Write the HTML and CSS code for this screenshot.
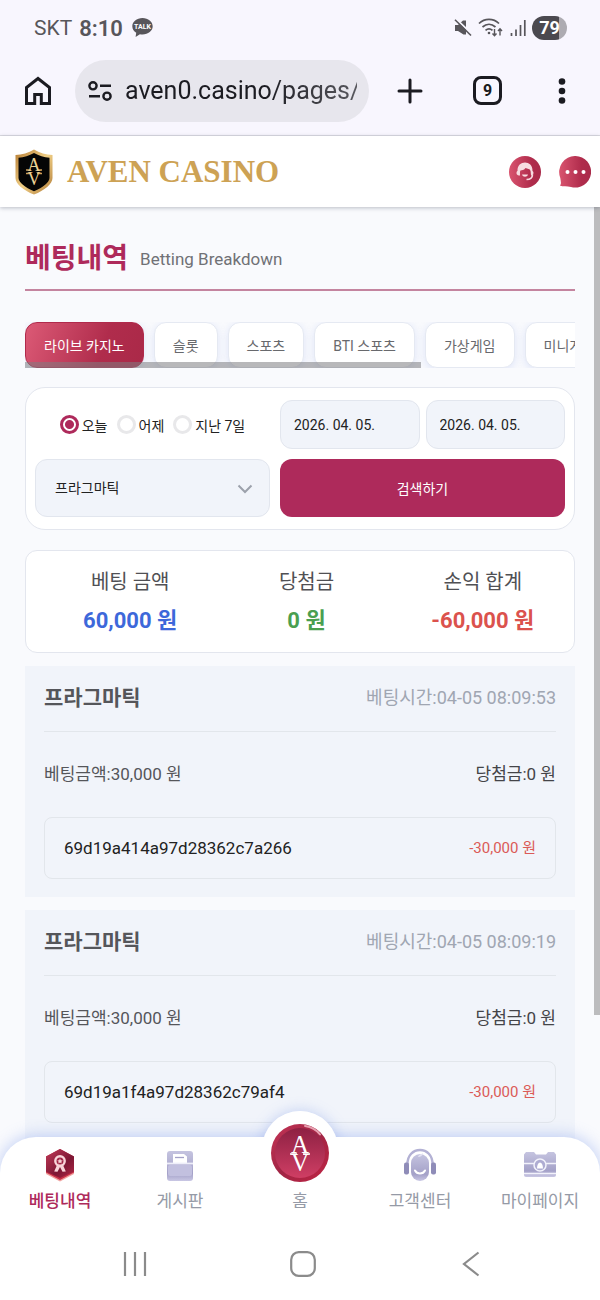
FILE: index.html
```html
<!DOCTYPE html>
<html lang="ko">
<head>
  <meta charset="UTF-8">
  <meta name="viewport" content="width=device-width, initial-scale=1.0">
  <title>AVEN CASINO - 베팅내역</title>
  <link rel="stylesheet" href="styles.css">
</head>
<body>
  <div class="status-bar">
    <span class="carrier">SKT</span>
    <span class="clock">8:10</span>
    <svg class="talk" width="21" height="20" viewBox="0 0 21 20">
      <path d="M10.500 0C4.700 0 .3 3.700 .3 8.300c0 2.700 1.500 5 3.900 6.500l-.6 4.200 4.300-2.700c.8.200 1.700.2 2.600.2 5.700 0 10.200-3.700 10.200-8.200S16.200 0 10.500 0z" fill="#58565b"/>
      <text x="10.500" y="11" text-anchor="middle" class="talk-text">TALK</text>
    </svg>
    <div class="status-icons">
      <svg width="18" height="18" viewBox="0 0 18 18">
        <path d="M1 6h3l5-4.500h3v14H9.500L4 12H1z" fill="#58565b"/>
        <path d="M1.500 -.5l17 16" stroke="#f8f6fe" stroke-width="2"/>
        <path d="M1 .8l16 15.700" stroke="#58565b" stroke-width="1.600"/>
      </svg>
      <svg width="26" height="20" viewBox="0 0 26 20" fill="none" stroke="#58565b" stroke-width="1.700">
        <path d="M1 5.500c5.500-5.500 14.500-5.500 20 0M4.500 9c4-3.500 9-3.500 13 0M7.500 12.300c2-1.700 5-1.700 7 0"/>
        <circle cx="11" cy="15" r="1.300" fill="#58565b" stroke="none"/>
        <path d="M16.500 11v6.500M14.500 15.500l2 2.200 2-2.200M22 17.500V11M20 13l2-2.200 2 2.200" stroke-width="1.400"/>
      </svg>
      <svg width="16" height="18" viewBox="0 0 16 18" stroke="#58565b" stroke-width="1.700">
        <path d="M1.500 14v3M6 10.500V17M10.500 6v11M14.800 1v16"/>
      </svg>
      <span class="battery">79</span>
    </div>
  </div>

  <div class="browser-bar">
    <button class="icon-btn" aria-label="홈">
      <svg width="26" height="30" viewBox="0 0 26 30" fill="none" stroke="#1b1b21" stroke-width="3">
        <path d="M1.500 27.500V11.500L13 2.500l11.500 9v16h-8.200v-9H9.700v9z"/>
      </svg>
    </button>
    <div class="address">
      <svg width="24" height="20" viewBox="0 0 24 20" fill="none" stroke="#1b1b21" stroke-width="2.400">
        <circle cx="5" cy="4.800" r="3.600"/>
        <circle cx="19" cy="15.200" r="3.600"/>
        <path d="M12 4.800h11M1 15.200h11"/>
      </svg>
      <input class="url" type="text" value="aven0.casino/pages/" aria-label="주소" readonly>
    </div>
    <button class="icon-btn plus" aria-label="새 탭">
      <svg width="26" height="26" viewBox="0 0 26 26" stroke="#1b1b21" stroke-width="3" stroke-linecap="round"><path d="M13 2v22M2 13h22"/></svg>
    </button>
    <button class="tab-count" aria-label="탭 9개">9</button>
    <button class="icon-btn more" aria-label="더보기">
      <svg width="8" height="26" viewBox="0 0 8 26" fill="#1b1b21"><circle cx="4" cy="3.500" r="3.300"/><circle cx="4" cy="13" r="3.300"/><circle cx="4" cy="22.500" r="3.300"/></svg>
    </button>
  </div>

  <header class="site-header">
    <a class="logo" href="#">
      <svg width="38" height="46" viewBox="0 0 38 46">
        <defs>
          <linearGradient id="gold" x1="0" y1="0" x2="1" y2="1">
            <stop offset="0" stop-color="#b57b32"/>
            <stop offset=".5" stop-color="#f0cf86"/>
            <stop offset="1" stop-color="#b07a35"/>
          </linearGradient>
        </defs>
        <path d="M19 .5c5.500 3.500 12 5 18.500 5.500v23c0 6-8 12.500-18.500 16.500C8.500 41.500.5 35 .5 29V6C7 5.500 13.500 4 19 .5z" fill="url(#gold)"/>
        <path d="M19 4c4.800 2.800 10 4.200 15.500 4.800V29c0 4.200-6.500 9.500-15.500 13.200C10 38.500 3.500 33.200 3.500 29V8.800C9 8.200 14.200 6.800 19 4z" fill="#050505"/>
        <path d="M11 21h5M22 21h5M11 24.500h5M22 24.500h5" stroke="#cfa15c" stroke-width="1.300"/>
        <text x="19" y="22" text-anchor="middle" class="shield-letter">A</text>
        <text x="19" y="36" text-anchor="middle" class="shield-letter">V</text>
      </svg>
      <span class="brand">AVEN CASINO</span>
    </a>
    <div class="header-actions">
      <button class="icon-btn" aria-label="고객센터">
        <svg width="32" height="32" viewBox="0 0 32 32">
          <defs>
            <linearGradient id="rose" x1="0" y1="0" x2="1" y2="0">
              <stop offset="0" stop-color="#d9546f"/>
              <stop offset=".7" stop-color="#b02c4c"/>
              <stop offset="1" stop-color="#a92b4a"/>
            </linearGradient>
          </defs>
          <circle cx="16" cy="16" r="16" fill="url(#rose)"/>
          <path d="M8.500 15C8 3.800 24 3.800 23.500 15h-2c-.5-2.500-3-2-5-3-1.800 2.500-3.500 2-5 2.500-.6.200-.5 2.500-.5 5H10c-3 0-3-4-1.500-4.500zM21.500 14.500c3.800-.5 4 4.800.5 5z" fill="#f7dce1"/>
          <path d="M13 18.500h6c-.8 3-5.200 3-6 0z" fill="#f7dce1"/>
          <path d="M23.500 18.500c0 3.500-2.500 5-6 5" fill="none" stroke="#f7dce1" stroke-width="1.600"/>
        </svg>
      </button>
      <button class="icon-btn" aria-label="메시지">
        <svg width="32" height="32" viewBox="0 0 32 32">
          <path d="M16.500 0A15.800 15.800 0 1 1 12 31C8 30 4 31 .8 29.500c2-2 .8-4.500.5-7.500A16 16 0 0 1 16.500 0z" fill="url(#rose)"/>
          <circle cx="8.500" cy="16" r="2" fill="#fff"/><circle cx="16.500" cy="16" r="2" fill="#fff"/><circle cx="24.500" cy="16" r="2" fill="#fff"/>
        </svg>
      </button>
    </div>
  </header>

  <main class="content">
    <div class="page-title">
      <h1>베팅내역</h1>
      <span>Betting Breakdown</span>
    </div>

    <div class="tabs">
      <button class="tab active">라이브 카지노</button>
      <button class="tab">슬롯</button>
      <button class="tab">스포츠</button>
      <button class="tab">BTI 스포츠</button>
      <button class="tab">가상게임</button>
      <button class="tab">미니게임</button>
      <i class="tabs-scroll"></i>
    </div>

    <form class="filter">
      <div class="periods">
        <label><input type="radio" name="period" checked>오늘</label>
        <label><input type="radio" name="period">어제</label>
        <label><input type="radio" name="period">지난 7일</label>
      </div>
      <div class="dates">
        <input type="text" value="2026. 04. 05." aria-label="시작일">
        <input type="text" value="2026. 04. 05." aria-label="종료일">
      </div>
      <div class="vendor">
        <select aria-label="게임사">
          <option>프라그마틱</option>
        </select>
        <svg width="16" height="10" viewBox="0 0 16 10" fill="none" stroke="#9ca1ab" stroke-width="2"><path d="M1.500 1.500L8 8l6.500-6.500"/></svg>
      </div>
      <button class="search" type="button">검색하기</button>
    </form>

    <dl class="summary">
      <div>
        <dt>베팅 금액</dt>
        <dd class="blue">60,000 원</dd>
      </div>
      <div>
        <dt>당첨금</dt>
        <dd class="green">0 원</dd>
      </div>
      <div>
        <dt>손익 합계</dt>
        <dd class="red">-60,000 원</dd>
      </div>
    </dl>

    <article class="bet">
      <div class="bet-head">
        <h2>프라그마틱</h2>
        <time>베팅시간:04-05 08:09:53</time>
      </div>
      <div class="bet-row">
        <span>베팅금액:30,000 원</span>
        <span class="win">당첨금:0 원</span>
      </div>
      <div class="bet-detail">
        <span>69d19a414a97d28362c7a266</span>
        <span class="loss">-30,000 원</span>
      </div>
    </article>

    <article class="bet">
      <div class="bet-head">
        <h2>프라그마틱</h2>
        <time>베팅시간:04-05 08:09:19</time>
      </div>
      <div class="bet-row">
        <span>베팅금액:30,000 원</span>
        <span class="win">당첨금:0 원</span>
      </div>
      <div class="bet-detail">
        <span>69d19a1f4a97d28362c79af4</span>
        <span class="loss">-30,000 원</span>
      </div>
    </article>
    <i class="page-scroll"></i>
  </main>

  <nav class="bottom-nav">
    <div class="nav-list">
      <a class="current" href="#">
        <svg width="30" height="34" viewBox="0 0 30 34">
          <defs>
            <linearGradient id="hex" x1="0" y1="0" x2="1" y2="1">
              <stop offset="0" stop-color="#c13a58"/>
              <stop offset=".6" stop-color="#7d1734"/>
              <stop offset="1" stop-color="#b02645"/>
            </linearGradient>
          </defs>
          <path d="M15 3l14 7v16l-14 7.500L1 26V10z" fill="#f0a3a0"/>
          <path d="M15 1l14 7.500v16L15 32 1 24.500v-16z" fill="#c52d45"/>
          <path d="M15 1l14 7.500v15L15 30 1 23.500v-15z" fill="url(#hex)"/>
          <path d="M12 17l-2.800 6.500 3.300.2 2.500-4.700 2.500 4.700 3.300-.2L18 17" fill="#f8d3d8"/>
          <circle cx="15" cy="13" r="4.700" fill="#a02444" stroke="#f8d3d8" stroke-width="2.400"/>
          <path d="M15 10.500l.8 1.700 1.900.2-1.400 1.300.4 1.900-1.700-1-1.700 1 .4-1.900-1.400-1.300 1.900-.2z" fill="#f8d3d8"/>
        </svg>
        <span>베팅내역</span>
      </a>
      <a href="#">
        <svg width="30" height="34" viewBox="0 0 30 34">
          <defs>
            <linearGradient id="lav" x1="0" y1="0" x2="0" y2="1">
              <stop offset="0" stop-color="#c5c4e0"/>
              <stop offset=".75" stop-color="#a4a1c8"/>
              <stop offset="1" stop-color="#c9c7e4"/>
            </linearGradient>
          </defs>
          <rect x="2" y="3" width="26" height="30" rx="3" fill="url(#lav)"/>
          <path d="M8 6h11l3 2.500V15H8z" fill="#fff"/>
          <path d="M10 9.500h9" stroke="#a4a1c8" stroke-width="1.300"/>
          <path d="M2 15.500h26" stroke="#eeeef9" stroke-width="1.800"/>
          <rect x="3" y="17" width="24" height="11" rx="2" fill="#c2c0df"/>
        </svg>
        <span>게시판</span>
      </a>
      <a href="#">
        <svg class="home-badge" width="76" height="76" viewBox="0 0 76 76">
          <defs>
            <linearGradient id="badge-rim" x1="0" y1="0" x2="1" y2="1">
              <stop offset="0" stop-color="#c53456"/>
              <stop offset=".5" stop-color="#a02545"/>
              <stop offset="1" stop-color="#c02343"/>
            </linearGradient>
            <linearGradient id="badge-face" x1="0" y1="0" x2="0" y2="1">
              <stop offset="0" stop-color="#8e2143"/>
              <stop offset="1" stop-color="#cf3e64"/>
            </linearGradient>
          </defs>
          <circle cx="38" cy="38" r="38" fill="#fff"/>
          <circle cx="38" cy="42" r="29" fill="url(#badge-rim)"/>
          <circle cx="38" cy="42" r="25" fill="url(#badge-face)"/>
          <path d="M43 15c7 1 12 4.500 15 8.500" fill="none" stroke="#e7a0b0" stroke-width="2" stroke-linecap="round"/>
          <path d="M28 43h7M41 43h7" stroke="#fff" stroke-width="1.300"/>
          <text x="38" y="42" text-anchor="middle" class="badge-letter">A</text>
          <text x="38" y="60" text-anchor="middle" class="badge-letter">V</text>
        </svg>
        <span>홈</span>
      </a>
      <a href="#">
        <svg width="34" height="34" viewBox="0 0 34 34">
          <path d="M4.500 17C3.500-3 30.500-3 29.500 17" fill="none" stroke="#b3b1d4" stroke-width="2.500"/>
          <rect x="1" y="14.500" width="5" height="12" rx="2" fill="#8f8cb8"/>
          <rect x="28" y="14.500" width="5" height="12" rx="2" fill="#8f8cb8"/>
          <rect x="8" y="6" width="18" height="27" rx="9" fill="url(#lav)"/>
          <path d="M12 22.500c2 4 8 4 10 0" fill="none" stroke="#fff" stroke-width="2" stroke-linecap="round"/>
          <path d="M15 9c1-3 4-3 5-4-.5 2.500-2 4-5 4z" fill="#e3e2f2"/>
        </svg>
        <span>고객센터</span>
      </a>
      <a href="#">
        <svg width="34" height="34" viewBox="0 0 34 34">
          <path d="M1 6.500L3 4h8l2 2.500h10L25 4h6l2 2.500V27a2 2 0 0 1-2 2H3a2 2 0 0 1-2-2z" fill="url(#lav)"/>
          <path d="M1 15.500h32M1 25.500h32" fill="none" stroke="#f2f2fb" stroke-width="1.500"/>
          <circle cx="17" cy="17" r="6" fill="#aeacd2" stroke="#f2f2fb" stroke-width="1.500"/>
          <path d="M14 20.500c0-4 1.500-6 3-6s3 2 3 6z" fill="#fff"/>
        </svg>
        <span>마이페이지</span>
      </a>
    </div>
  </nav>

  <div class="system-bar">
    <button class="icon-btn" aria-label="최근 앱">
      <svg width="26" height="26" viewBox="0 0 26 26" stroke="#8b8b8b" stroke-width="2.200"><path d="M3 1v24M13 1v24M23 1v24"/></svg>
    </button>
    <button class="icon-btn" aria-label="홈 화면">
      <svg width="26" height="26" viewBox="0 0 26 26" fill="none" stroke="#8b8b8b" stroke-width="2.200"><rect x="1.200" y="1.200" width="23.600" height="23.600" rx="7.500"/></svg>
    </button>
    <button class="icon-btn" aria-label="뒤로">
      <svg width="26" height="26" viewBox="0 0 26 26" fill="none" stroke="#8b8b8b" stroke-width="2.200"><path d="M20.500 1.500L6 13l14.500 11.500"/></svg>
    </button>
  </div>
</body>
</html>
```
FILE: styles.css
```css
* {
  box-sizing: border-box;
}
body {
  margin: 0;
  height: 100vh;
  display: flex;
  flex-direction: column;
  overflow: hidden;
  background: #fff;
  color: #222;
  font-family: Roboto, "Noto Sans CJK KR", sans-serif;
}
button, input, select {
  font-family: inherit;
  margin: 0;
}
svg {
  display: block;
  flex: none;
}
a {
  text-decoration: none;
}
h1, h2, dl, dd {
  margin: 0;
}
.icon-btn {
  flex: none;
  padding: 0;
  border: none;
  background: none;
}

/* phone status bar */
.status-bar {
  display: flex;
  align-items: center;
  height: 56px;
  padding: 0 33px 0 34px;
  background: #f8f6fe;
  color: #58565b;
  flex: none;
}
.carrier {
  font-size: 21px;
}
.clock {
  margin-left: 7px;
  font-size: 22px;
  font-weight: 600;
}
.talk {
  margin-left: 9px;
}
.talk-text {
  font: bold 7px Roboto, sans-serif;
  fill: #fff;
}
.status-icons {
  display: flex;
  align-items: center;
  gap: 6px;
  margin-left: auto;
}
.battery {
  width: 35px;
  border-radius: 12px;
  background: linear-gradient(to right, #4b494f 78%, #adabb1 78%);
  color: #fff;
  font-size: 18px;
  font-weight: bold;
  line-height: 24px;
  text-align: center;
}

/* browser bar */
.browser-bar {
  display: flex;
  align-items: center;
  height: 80px;
  padding: 0 34px 10px 25px;
  border-bottom: 1px solid #dcdbe2;
  background: #f8f6fe;
  flex: none;
}
.address {
  display: flex;
  flex: 1;
  align-items: center;
  gap: 13px;
  min-width: 0;
  height: 62px;
  margin-left: 24px;
  padding: 0 12px 0 13px;
  border-radius: 31px;
  background: #e7e6ed;
}
.url {
  flex: 1;
  min-width: 0;
  padding: 0;
  border: none;
  background: none;
  color: #1b1b21;
  font-size: 25px;
  line-height: 34px;
  mask-image: linear-gradient(to right, #000 60%, rgba(0, 0, 0, 0.7));
}
.plus {
  margin-left: 28px;
}
.tab-count {
  flex: none;
  width: 29px;
  height: 29px;
  margin-left: 50px;
  padding: 0;
  border: 3px solid #1b1b21;
  border-radius: 8px;
  background: none;
  color: #1b1b21;
  font-size: 16px;
  font-weight: bold;
  line-height: 20px;
}
.more {
  margin-left: 56px;
}

/* site header */
.site-header {
  position: relative;
  z-index: 2;
  display: flex;
  align-items: center;
  justify-content: space-between;
  height: 71px;
  padding: 0 9px 0 15px;
  background: #fff;
  box-shadow: 0 1px 4px rgba(40, 50, 70, 0.3);
  flex: none;
}
.logo {
  display: flex;
  align-items: center;
  gap: 14px;
}
.brand {
  color: #cda254;
  font-family: "Liberation Serif", serif;
  font-size: 31px;
  font-weight: bold;
}
.shield-letter {
  font: 18px "Liberation Serif", serif;
  fill: #ecd193;
}
.header-actions {
  display: flex;
  gap: 18px;
}

/* content */
.content {
  position: relative;
  flex: 1;
  min-height: 0;
  padding: 32px 25px 0;
  overflow: hidden;
  background: #f9fafd;
}
.page-scroll {
  position: absolute;
  top: 0;
  right: 0;
  width: 6px;
  height: 808px;
  background: #bcbcbe;
}
.page-title {
  display: flex;
  align-items: center;
  gap: 12px;
  padding-bottom: 10px;
  border-bottom: 2px solid #c4849f;
  line-height: 38px;
}
.page-title h1 {
  color: #ae2a5b;
  font-size: 28px;
  font-weight: bold;
  line-height: 40px;
}
.page-title span {
  color: #707176;
  font-size: 17px;
}
.tabs {
  position: relative;
  display: flex;
  gap: 10px;
  height: 46px;
  margin-top: 31px;
  overflow: hidden;
}
.tab {
  flex: none;
  height: 46px;
  padding: 0 18px;
  border: 1px solid #e5e9f2;
  border-radius: 12px;
  background: #fff;
  box-shadow: 0 2px 8px rgba(130, 155, 230, 0.22);
  color: #68696d;
  font-size: 14px;
}
.tab.active {
  border-color: #b02a4c;
  background: linear-gradient(110deg, #dc5a76, #b02c4c 65%, #aa2948);
  color: #fff;
}
.tabs-scroll {
  position: absolute;
  left: 0;
  bottom: 0;
  width: 72%;
  height: 6px;
  background: rgba(125, 125, 130, 0.55);
}
.filter {
  display: grid;
  grid-template-columns: 235fr 285fr;
  gap: 10px;
  margin-top: 19px;
  padding: 12px 9px;
  border: 1px solid #e3e6ee;
  border-radius: 20px;
  background: #fff;
  font-size: 14px;
}
.periods {
  display: flex;
  align-items: center;
  justify-content: center;
  gap: 9px;
}
.periods label {
  display: flex;
  align-items: center;
  gap: 3px;
}
.periods input {
  appearance: none;
  width: 19px;
  height: 19px;
  border: 3px solid #e8e8ea;
  border-radius: 50%;
  background: #fff;
}
.periods input:checked {
  border-color: #ae2a5b;
  background: radial-gradient(circle, #ae2a5b 4px, #fff 5px);
}
.dates {
  display: flex;
  gap: 6px;
}
.dates input {
  width: 50%;
  height: 49px;
  padding: 0 13px;
  border: 1px solid #e2e6ee;
  border-radius: 12px;
  background: #f1f4fa;
  color: #222;
  font-size: 14px;
}
.vendor {
  position: relative;
}
.vendor select {
  appearance: none;
  width: 100%;
  height: 58px;
  padding: 0 19px;
  border: 1px solid #e2e6ee;
  border-radius: 12px;
  background: #f1f4fa;
  color: #222;
  font-size: 14px;
}
.vendor svg {
  position: absolute;
  top: 25px;
  right: 17px;
  pointer-events: none;
}
.search {
  border: none;
  border-radius: 12px;
  background: #ae2a5b;
  color: #fff;
  font-size: 14px;
}
.summary {
  display: grid;
  grid-template-columns: repeat(3, 1fr);
  margin-top: 20px;
  padding: 16px 3px 16px 16px;
  border: 1px solid #e3e6ee;
  border-radius: 12px;
  background: #fff;
  text-align: center;
  line-height: 30px;
}
.summary dt {
  color: #505054;
  font-size: 20px;
}
.summary dd {
  margin-top: 9px;
  font-size: 22px;
  font-weight: bold;
}
.blue {
  color: #3d68da;
}
.green {
  color: #4a9f50;
}
.red {
  color: #db524d;
}
.bet {
  margin-top: 13px;
  padding: 18px 19px;
  background: #f1f4fa;
  color: #55565a;
}
.bet-head {
  display: flex;
  justify-content: space-between;
  padding-bottom: 19px;
  border-bottom: 1px solid #e2e6eb;
  line-height: 28px;
}
.bet-head h2 {
  font-size: 21px;
  font-weight: bold;
}
.bet-head time {
  color: #a0a6b2;
  font-size: 18px;
}
.bet-row {
  display: flex;
  justify-content: space-between;
  margin-top: 29px;
  font-size: 17px;
  line-height: 26px;
}
.win {
  color: #444448;
}
.bet-detail {
  display: flex;
  align-items: center;
  justify-content: space-between;
  height: 62px;
  margin-top: 30px;
  padding: 0 19px;
  border: 1px solid #e2e6eb;
  border-radius: 8px;
  color: #222;
  font-size: 17px;
  line-height: 26px;
}
.loss {
  color: #db5a57;
  font-size: 15px;
}

/* bottom navigation, its round corners lie over the content */
.bottom-nav {
  position: relative;
  z-index: 3;
  margin-top: -40px;
  flex: none;
}
.bottom-nav::before {
  content: "";
  position: absolute;
  top: -26px;
  left: 50%;
  width: 76px;
  height: 76px;
  margin-left: -38px;
  border-radius: 50%;
  box-shadow: 0 0 14px rgba(120, 150, 235, 0.4);
}
.nav-list {
  position: relative;
  display: grid;
  grid-template-columns: repeat(5, 1fr);
  padding: 11px 0 13px;
  border-radius: 36px 36px 0 0;
  background: #fff;
  box-shadow: 0 -1px 16px rgba(120, 150, 235, 0.45);
}
.nav-list a {
  position: relative;
  display: flex;
  flex-direction: column;
  align-items: center;
  justify-content: flex-end;
  gap: 6px;
  color: #959aa6;
  font-size: 17px;
  line-height: 26px;
}
.nav-list .current {
  color: #ae2a5b;
  font-weight: 500;
}
.home-badge {
  position: absolute;
  top: -37px;
}
.badge-letter {
  font: 25px "Liberation Serif", serif;
  fill: #fff;
}

/* android keys */
.system-bar {
  position: relative;
  z-index: 3;
  display: flex;
  justify-content: space-between;
  align-items: center;
  height: 73px;
  padding: 0 116px 0 122px;
  background: #fff;
  flex: none;
}
```
